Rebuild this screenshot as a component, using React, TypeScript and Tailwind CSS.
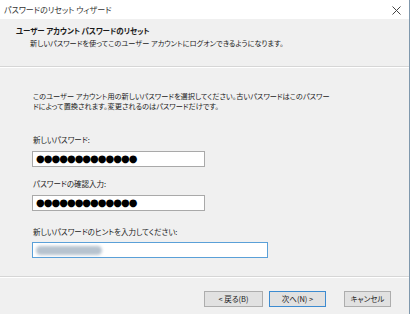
import React from 'react';

const jp = "[font-family:'Noto_Sans_CJK_JP',sans-serif] [font-feature-settings:'palt']";

function Dots() {
    return (
        <span className="text-[10px] leading-none tracking-[-1px] text-black [font-family:'DejaVu_Sans',sans-serif]">
            {'●●●●●●●●●●●●●'}
        </span>
    );
}

export default function App() {
    return (
        <div className={`w-[410px] h-[314px] bg-[#f0f0f0] border-r border-[#7f98ad] flex flex-col text-[#1a1a1a] ${jp}`}>
            {/* Title bar */}
            <div className="h-[19px] bg-white flex items-center justify-between pl-[4px] pr-[8px]">
                <span className="text-[8px] text-[#333]">パスワードのリセット ウィザード</span>
                <svg width="9" height="9" viewBox="0 0 9 9" className="mt-[1px]">
                    <path d="M0.5 0.5 L8.5 8.5 M8.5 0.5 L0.5 8.5" stroke="#444" strokeWidth="1" />
                </svg>
            </div>

            {/* Header */}
            <div className="h-[48px] pl-[16px] pt-[6px] border-b border-[#d6d6d6]">
                <p className="text-[7.5px] font-bold leading-[12px] tracking-[-0.1px]">ユーザー アカウント パスワードのリセット</p>
                <p className="text-[7.2px] leading-[12px] pl-[14px]">新しいパスワードを使ってこのユーザー アカウントにログオンできるようになります。</p>
            </div>
            <div className="h-px bg-white" />

            {/* Body */}
            <div className="flex-1 pl-[33px] pt-[23px] text-[7.5px]">
                <p className="leading-[10px] text-[7.2px]">
                    このユーザー アカウント用の新しいパスワードを選択してください。古いパスワードはこのパスワー
                    <br />
                    ドによって置換されます。変更されるのはパスワードだけです。
                </p>
                <p className="mt-[24px] leading-[10px]">新しいパスワード:</p>
                <div className="mt-[6px] ml-[-1px] w-[173px] h-[16px] bg-white border border-[#a9a9a9] flex items-center pl-[3px]">
                    <Dots />
                </div>
                <p className="mt-[12px] leading-[10px]">パスワードの確認入力:</p>
                <div className="mt-[6px] ml-[-1px] w-[173px] h-[16px] bg-white border border-[#a9a9a9] flex items-center pl-[3px]">
                    <Dots />
                </div>
                <p className="mt-[16px] leading-[10px]">新しいパスワードのヒントを入力してください:</p>
                <div className="mt-[5px] ml-[-1px] w-[236px] h-[16px] bg-white border border-[#5aa0d8] flex items-center pl-[3px]">
                    <div className="w-[66px] h-[9px] rounded-full bg-[#b7c3cf] blur-[1.5px]" />
                </div>
            </div>

            {/* Footer */}
            <div className="h-px bg-[#d6d6d6]" />
            <div className="h-px bg-white" />
            <div className="h-[36px] flex items-start pt-[13px] pl-[204px] gap-[6px] text-[7.5px]">
                <button className="w-[59px] h-[16px] bg-[#e1e1e1] border border-[#adadad] flex items-center justify-center">
                    &lt; 戻る(B)
                </button>
                <button className="w-[57px] h-[16px] bg-[#e1e1e1] border border-[#3d8bd0] flex items-center justify-center">
                    次へ(N) &gt;
                </button>
                <button className="ml-[12px] w-[47px] h-[16px] bg-[#e1e1e1] border border-[#adadad] flex items-center justify-center">
                    キャンセル
                </button>
            </div>
        </div>
    );
}
